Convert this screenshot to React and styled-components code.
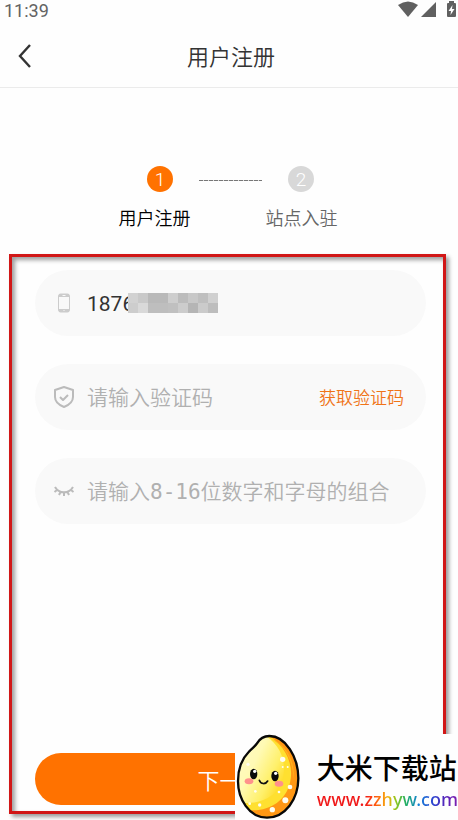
import React, { useState } from "react";
import styled, { createGlobalStyle } from "styled-components";

const GlobalStyle = createGlobalStyle`
  *, *::before, *::after { box-sizing: border-box; }
  body {
    margin: 0;
    background: #fefefe;
    font-family: Roboto, "Noto Sans CJK SC", sans-serif;
    color: #333;
  }
  button, input { font-family: inherit; border: 0; padding: 0; background: none; }
  button { cursor: pointer; }
`;

const Screen = styled.div`
  min-height: 100vh;
  display: flex;
  flex-direction: column;
`;

const StatusBar = styled.div`
  height: 22px;
  padding: 0 2px 0 4px;
  display: flex;
  align-items: flex-start;
  justify-content: space-between;
  color: #636363;
  font-size: 18px;
  line-height: 21px;
`;

const StatusIcons = styled.svg`
  width: 60px;
  height: 20px;
  fill: #606060;
`;

const Header = styled.header`
  height: 66px;
  padding: 0 16px;
  display: grid;
  grid-template-columns: 32px 1fr 32px;
  align-items: center;
  border-bottom: 1px solid #ebebeb;
`;

const BackButton = styled.button`
  width: 32px;
  height: 32px;
  display: flex;
  align-items: center;
  svg { width: 18px; height: 26px; }
`;

const Title = styled.h1`
  margin: 0;
  padding: 6px 0 0 4px;
  text-align: center;
  font-size: 22px;
  line-height: 32px;
  font-weight: 350;
`;

const Steps = styled.section`
  height: 166px;
  padding-top: 78px;
  display: flex;
  flex-direction: column;
  align-items: center;
  gap: 14px;
`;

const StepMarkers = styled.div`
  display: flex;
  align-items: center;
  gap: 26px;
  padding-left: 3px;
`;

const StepMarker = styled.span`
  width: 26px;
  height: 26px;
  border-radius: 50%;
  background: ${(p) => (p.$active ? "#ff7200" : "#d8d8d8")};
  color: #fff;
  text-align: center;
  font-size: 19px;
  line-height: 27px;
  font-weight: 300;
`;

const StepLine = styled.span`
  width: 63px;
  height: 1px;
  margin-top: 2px;
  background: repeating-linear-gradient(90deg, #777 0 4px, #ddd 4px 5px);
`;

const StepLabels = styled.div`
  display: flex;
  gap: 75px;
  padding-right: 2px;
`;

const StepLabel = styled.span`
  font-size: 18px;
  line-height: 26px;
  font-weight: 350;
  color: ${(p) => (p.$active ? "#000" : "#666")};
`;

const FormFrame = styled.form`
  flex: 1;
  margin: 0 12px 6px 9px;
  padding: 13px 17px 6px 23px;
  display: flex;
  flex-direction: column;
  gap: 28px;
  border: 3px solid #d11717;
  box-shadow: 3px 3px 4px rgba(0, 0, 0, 0.38), inset 3px 3px 4px rgba(0, 0, 0, 0.38);
`;

const Field = styled.div`
  position: relative;
  height: 66px;
  padding: 0 22px 0 18px;
  display: flex;
  align-items: center;
  border-radius: 33px;
  background: #f9f9f9;
`;

const FieldIcon = styled.svg`
  flex: none;
  width: 22px;
  height: 24px;
  margin-right: 12px;
  fill: none;
  stroke: #bbb;
  stroke-width: 2;
  stroke-linejoin: round;
`;

const TextInput = styled.input`
  flex: 1;
  min-width: 0;
  height: 42px;
  padding-top: 2px;
  outline: none;
  color: #333;
  font-size: 21px;
  &::placeholder {
    color: #b0b0b0;
    opacity: 1;
    font-weight: 350;
    font-family: ${(p) => (p.type === "password" ? '"DejaVu Sans Mono", "Noto Sans CJK SC", monospace' : "inherit")};
  }
`;

const Mosaic = styled.div`
  position: absolute;
  left: 93px;
  top: 23px;
  display: grid;
  grid-template-columns: repeat(9, 10px);
  grid-auto-rows: 10px;
`;

const MosaicCell = styled.span`
  background: ${(p) => p.$tone};
`;

const CodeButton = styled.button`
  flex: none;
  padding-top: 2px;
  color: #f07418;
  font-size: 17px;
  line-height: 28px;
  font-weight: 350;
`;

const SubmitButton = styled.button`
  height: 52px;
  margin-top: auto;
  border-radius: 26px;
  background: #ff7200;
  color: #fff;
  font-size: 22px;
  font-weight: 350;
`;

const SiteBadge = styled.aside`
  position: fixed;
  right: 0;
  bottom: 0;
  height: 86px;
  display: flex;
  align-items: center;
  gap: 16px;
  background: #fefefe;
`;

const RiceMascot = styled.svg`
  width: 66px;
  height: 86px;
`;

const SiteText = styled.div`
  display: flex;
  flex-direction: column;
  padding-top: 10px;
`;

const SiteName = styled.strong`
  color: #000;
  font-size: 28px;
  line-height: 34px;
  font-weight: 500;
`;

const SiteLink = styled.a`
  font-family: "Noto Sans", "Open Sans", sans-serif;
  font-size: 18px;
  line-height: 24px;
  font-weight: 500;
  text-decoration: none;
  color: transparent;
  background: linear-gradient(90deg, #f01818 0 34%, #ff4a10 40%, #f6b010 50%, #8fc71e 56%, #1fae62 63%, #1583d8 72%, #2a45cf 82%, #5a22b8 92%, #8020b0);
  background-clip: text;
  -webkit-background-clip: text;
`;

const tones = [
  "#d2d2d2", "#c9c9c9", "#b9b9b9", "#b9b9b9", "#cecece", "#bcbcbc", "#c8c8c8", "#bfbfbf", "#d0d0d0",
  "#cdcdcd", "#d9d9d9", "#bebebe", "#bebebe", "#c0c0c0", "#cccccc", "#b5b5b5", "#cbcbcb", "#bdbdbd",
];

function Rice() {
  return (
    <RiceMascot viewBox="9 12 198 258" aria-hidden="true">
      <defs>
        <linearGradient id="grain" x1="0" y1="0" x2="1" y2="0.7">
          <stop offset="0" stopColor="#fffbd0" />
          <stop offset="0.5" stopColor="#fffab4" />
          <stop offset="0.8" stopColor="#fff06a" />
          <stop offset="1" stopColor="#ffdc2a" />
        </linearGradient>
        <clipPath id="grainClip">
          <path d="M112 18C94 18 82 28 75 40C69 50 60 54 50 66C30 86 18 118 18 154C18 205 50 263 105 263C160 263 199 207 199 145C199 80 160 18 112 18Z" />
        </clipPath>
      </defs>
      <g clipPath="url(#grainClip)">
        <rect x="9" y="12" width="198" height="258" fill="#ff9714" />
        <path d="M100 10C158 42 188 101 174 158C160 216 106 248 44 239L0 180V0Z" fill="#ffe030" />
        <path d="M90 10C138 38 161 81 155 133C149 184 105 222 36 219L0 150V0Z" fill="url(#grain)" />
        <path d="M112 24C164 42 190 94 185 148C182 83 154 44 112 24Z" fill="#ffb31c" />
      </g>
      <g fill="#fffdf0">
        <circle cx="152" cy="88" r="8" /><circle cx="152" cy="111" r="3" /><circle cx="167" cy="111" r="3" />
        <circle cx="174" cy="171" r="7" /><circle cx="160" cy="211" r="9" /><circle cx="121" cy="239" r="8" />
        <circle cx="83" cy="225" r="5" /><circle cx="53" cy="221" r="4" /><circle cx="141" cy="186" r="4" />
        <circle cx="48" cy="103" r="5" /><circle cx="70" cy="184" r="4" />
      </g>
      <ellipse cx="51" cy="154" rx="13" ry="9" fill="#ff918c" />
      <ellipse cx="141" cy="161" rx="13" ry="9" fill="#ff918c" />
      <ellipse cx="65" cy="132" rx="11" ry="16" fill="#0a0a0a" />
      <ellipse cx="129" cy="138" rx="11" ry="16" fill="#0a0a0a" />
      <circle cx="68" cy="124" r="5" fill="#fff" /><circle cx="131" cy="130" r="5" fill="#fff" />
      <path d="M82 151C86 163 101 164 107 153" fill="none" stroke="#111" strokeWidth="5" strokeLinecap="round" />
      <path d="M112 18C94 18 82 28 75 40C69 50 60 54 50 66C30 86 18 118 18 154C18 205 50 263 105 263C160 263 199 207 199 145C199 80 160 18 112 18Z" fill="none" stroke="#080808" strokeWidth="7" />
    </RiceMascot>
  );
}

export default function App() {
  const [phone, setPhone] = useState("1876");
  return (
    <>
      <GlobalStyle />
      <Screen>
        <StatusBar>
          <span>11:39</span>
          <StatusIcons viewBox="396 0 60 20" aria-hidden="true">
            <path d="M398 5Q408-2 418 5L408 17Z" />
            <path d="M421 17L436 2V17Z" />
            <path fillRule="evenodd" d="M449 3V1H454V3H455Q456 3 456 4V16Q456 17 455 17H448Q447 17 447 16V4Q447 3 448 3ZM452.500 5L448.500 11H451L450.500 15L454.500 9H452Z" />
          </StatusIcons>
        </StatusBar>
        <Header>
          <BackButton type="button" aria-label="返回">
            <svg viewBox="0 0 18 26" fill="none" stroke="#333" strokeWidth="2.400">
              <path d="M14 3L4 14L14 25" />
            </svg>
          </BackButton>
          <Title>用户注册</Title>
        </Header>
        <Steps>
          <StepMarkers>
            <StepMarker $active>1</StepMarker>
            <StepLine />
            <StepMarker>2</StepMarker>
          </StepMarkers>
          <StepLabels>
            <StepLabel $active>用户注册</StepLabel>
            <StepLabel>站点入驻</StepLabel>
          </StepLabels>
        </Steps>
        <FormFrame onSubmit={(e) => e.preventDefault()}>
          <Field>
            <FieldIcon viewBox="0 0 22 24" aria-hidden="true">
              <rect x="5.500" y="3" width="11" height="18" rx="2" strokeWidth="1" stroke="#ccc" />
              <path d="M6 4.500H16M6 19.500H16" strokeWidth="3" stroke="#ccc" />
              <path d="M9.500 4.500H12.500M10.500 19.500H11.500" strokeWidth="1" stroke="#f9f9f9" />
            </FieldIcon>
            <TextInput type="tel" aria-label="手机号" value={phone} onChange={(e) => setPhone(e.target.value)} />
            <Mosaic aria-hidden="true">
              {tones.map((tone, i) => <MosaicCell key={i} $tone={tone} />)}
            </Mosaic>
          </Field>
          <Field>
            <FieldIcon viewBox="0 0 22 24" aria-hidden="true">
              <path d="M11 2L20 5V12C20 17 16 20 11 22C6 20 2 17 2 12V5Z" />
              <path d="M7 12L10 15L15 10" />
            </FieldIcon>
            <TextInput type="text" aria-label="验证码" placeholder="请输入验证码" />
            <CodeButton type="button">获取验证码</CodeButton>
          </Field>
          <Field>
            <FieldIcon viewBox="0 0 22 24" aria-hidden="true">
              <path d="M2 8C6 15 16 15 20 8M4 11L1.500 13M7.500 13L6 16M11 13V17M14.500 13L16 16M18 11L20.500 13" />
            </FieldIcon>
            <TextInput type="password" aria-label="密码" placeholder="请输入8-16位数字和字母的组合" />
          </Field>
          <SubmitButton type="submit">下一步</SubmitButton>
        </FormFrame>
      </Screen>
      <SiteBadge>
        <Rice />
        <SiteText>
          <SiteName>大米下载站</SiteName>
          <SiteLink href="#">www.zzhyw.com</SiteLink>
        </SiteText>
      </SiteBadge>
    </>
  );
}
